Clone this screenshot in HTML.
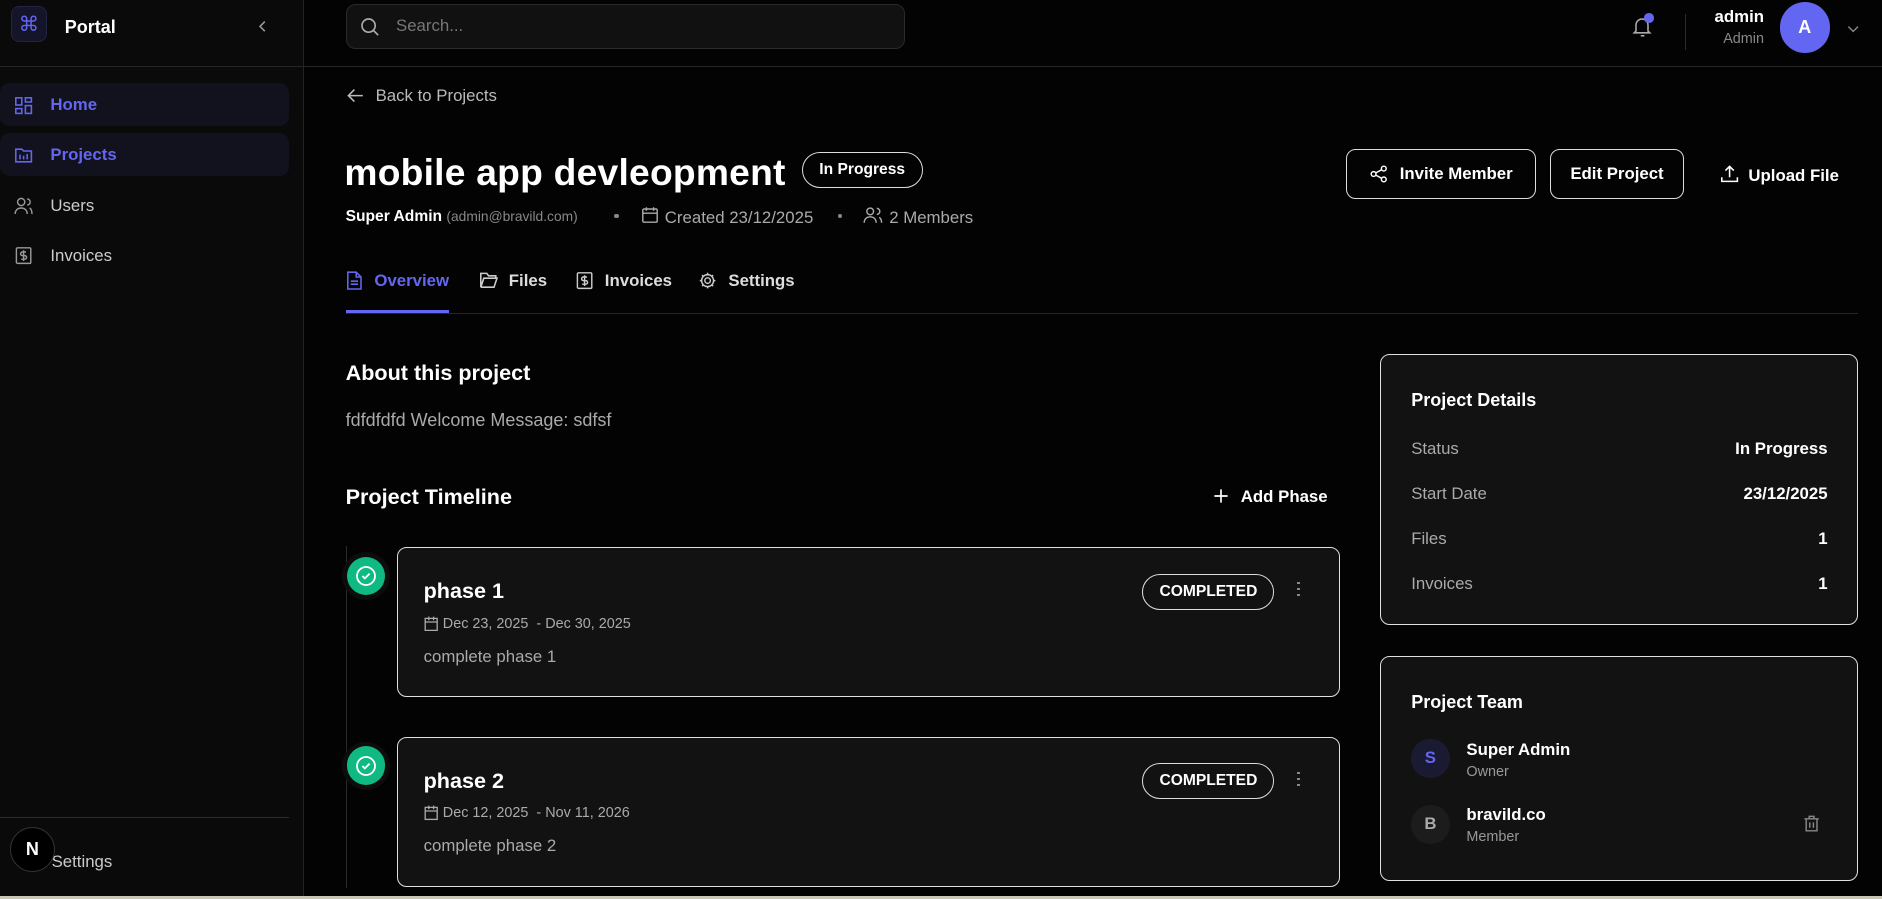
<!DOCTYPE html>
<html><head><meta charset="utf-8">
<style>
*{box-sizing:border-box;margin:0;padding:0}
html,body{width:1882px;height:899px;overflow:hidden;background:#030303}
#w{zoom:1.2;width:1568px;height:749px;position:relative;font-family:"Liberation Sans",sans-serif;color:#fff;background:#030303}
.a{position:absolute;white-space:nowrap}
.side{left:0;top:0;width:253px;height:749px;background:#0a0a0a;border-right:1px solid #222}
.nav{left:0;width:241px;height:36px;border-radius:8px;background:#12121f}
.card{background:#121212;border:1px solid #e0e0e0;border-radius:8px}
.g{color:#a8a8a8}
svg{position:absolute}
.btn{border:1px solid #ddd;border-radius:8px;height:42px;font-weight:bold;font-size:14px;display:flex;align-items:center;justify-content:center}
.pill{border:1px solid #ddd;border-radius:16px;font-weight:bold;font-size:13px;display:flex;align-items:center;justify-content:center}
</style></head><body><div id="w">
<div class="a side"></div>
<div class="a" style="left:0;top:55px;width:1568px;height:1px;background:#262626"></div>
<div class="a" style="left:9px;top:5px;width:30px;height:30px;border-radius:7px;background:#15152a;border:1px dotted #33335a;color:#6366f1;font-size:17px;text-align:center;line-height:30px">⌘</div>
<div class="a" style="left:54px;top:14px;font-size:15px;font-weight:bold">Portal</div>
<svg style="left:212px;top:15px" width="14" height="14" viewBox="0 0 14 14"><path d="M9 3L5 7l4 4" stroke="#999" fill="none" stroke-width="1.3"/></svg>
<div class="a nav" style="top:69px"></div>
<div class="a nav" style="top:111px"></div>
<svg style="left:12px;top:80px" width="16" height="16" viewBox="0 0 16 16" fill="none" stroke="#6366f1" stroke-width="1.3"><rect x="1.5" y="1.5" width="5" height="6"/><rect x="9.5" y="1.5" width="5" height="3.5"/><rect x="9.5" y="8" width="5" height="6.5"/><rect x="1.5" y="10.5" width="5" height="4"/></svg>
<div class="a" style="left:42px;top:79px;font-size:14px;font-weight:bold;color:#6366f1">Home</div>
<svg style="left:12px;top:121px" width="16" height="16" viewBox="0 0 16 16" fill="none" stroke="#6366f1" stroke-width="1.3"><path d="M1.5 3.5h5l1.5 1.5h6.5v9h-13z"/><path d="M5 8v4M8 9v3M11 7.5v4.5"/></svg>
<div class="a" style="left:42px;top:121px;font-size:14px;font-weight:bold;color:#6366f1">Projects</div>
<svg style="left:12px;top:163px" width="16" height="16" viewBox="0 0 16 16" fill="none" stroke="#999" stroke-width="1.2"><circle cx="6" cy="5" r="3"/><path d="M1 15c0-3 2-5 5-5s5 2 5 5M11 2.5a2.5 2.5 0 010 5M13 10c1.5.7 2 2.5 2 5"/></svg>
<div class="a" style="left:42px;top:163px;font-size:14px;color:#ccc">Users</div>
<svg style="left:12px;top:205px" width="16" height="16" viewBox="0 0 16 16" fill="none" stroke="#999" stroke-width="1.2"><rect x="2" y="1.5" width="12" height="13" rx="1"/><path d="M10 5H7a1.5 1.5 0 000 3h2a1.5 1.5 0 010 3H6M8 3.5v9"/></svg>
<div class="a" style="left:42px;top:205px;font-size:14px;color:#ccc">Invoices</div>
<div class="a" style="left:0;top:681px;width:241px;height:1px;background:#2a2a2a"></div>
<div class="a" style="left:43px;top:710px;font-size:14px;color:#ccc">Settings</div>
<div class="a" style="left:8px;top:689px;width:38px;height:38px;border-radius:50%;background:#000;border:1px solid #333;text-align:center;line-height:36px;font-size:15px;font-weight:bold">N</div>

<div class="a" style="left:288px;top:3px;width:466px;height:38px;background:#111;border:1px solid #2a2a2a;border-radius:8px"></div>
<svg style="left:299px;top:13px" width="18" height="18" viewBox="0 0 18 18" fill="none" stroke="#aaa" stroke-width="1.4"><circle cx="8" cy="8" r="5.5"/><path d="M12 12l4 4"/></svg>
<div class="a" style="left:330px;top:13px;font-size:14px;color:#777">Search...</div>
<svg style="left:1358px;top:11px" width="22" height="22" viewBox="0 0 22 22" fill="none" stroke="#aaa" stroke-width="1.3"><path d="M5 15V10a5 5 0 0110 0v5l1.5 1.5h-13z"/><path d="M9 19h3"/></svg>
<div class="a" style="left:1370px;top:11px;width:8px;height:8px;border-radius:50%;background:#6366f1"></div>
<div class="a" style="left:1404px;top:12px;width:1px;height:30px;background:#2a2a2a"></div>
<div class="a" style="left:1400px;width:70px;top:6px;text-align:right;font-size:14px;font-weight:bold">admin</div>
<div class="a" style="left:1400px;width:70px;top:26px;text-align:right;font-size:12px;color:#888">Admin</div>
<div class="a" style="left:1483px;top:2px;width:42px;height:42px;border-radius:50%;background:#6366f1;text-align:center;line-height:42px;font-weight:bold;font-size:15px">A</div>
<svg style="left:1538px;top:19px" width="12" height="10" viewBox="0 0 12 10"><path d="M2 3l4 4 4-4" stroke="#888" fill="none" stroke-width="1.2"/></svg>

<svg style="left:288px;top:72px" width="16" height="16" viewBox="0 0 16 16" fill="none" stroke="#bbb" stroke-width="1.3"><path d="M14 8H2M7 3L2 8l5 5"/></svg>
<div class="a g" style="left:313px;top:72px;font-size:14px;color:#bbb">Back to Projects</div>
<div class="a" style="left:287px;top:126px;font-size:31px;font-weight:bold;letter-spacing:0.2px">mobile app devleopment</div>
<div class="a pill" style="left:668px;top:127px;width:101px;height:30px">In Progress</div>
<div class="a" style="left:288px;top:173px;font-size:13px"><b>Super Admin</b> <span style="color:#888;font-size:11.5px">(admin@bravild.com)</span></div>
<div class="a" style="left:512px;top:178px;width:4px;height:4px;border-radius:50%;background:#888"></div>
<svg style="left:534px;top:172px" width="15" height="15" viewBox="0 0 15 15" fill="none" stroke="#aaa" stroke-width="1.2"><rect x="1.5" y="2.5" width="12" height="11" rx="1"/><path d="M1.5 6h12M4.5 1v3M10.5 1v3"/></svg>
<div class="a" style="left:554px;top:173px;font-size:14px;color:#aaa">Created 23/12/2025</div>
<div class="a" style="left:698px;top:178px;width:4px;height:4px;border-radius:50%;background:#888"></div>
<svg style="left:719px;top:172px" width="17" height="15" viewBox="0 0 17 15" fill="none" stroke="#aaa" stroke-width="1.2"><circle cx="6" cy="4.5" r="2.8"/><path d="M1 14c0-3 2-5 5-5s5 2 5 5M11.5 2a2.5 2.5 0 010 5M13.5 9.5c1.3.7 2 2.3 2 4.5"/></svg>
<div class="a" style="left:741px;top:173px;font-size:14px;color:#aaa">2 Members</div>

<div class="a btn" style="left:1122px;top:124px;width:158px"><svg style="position:static;margin-right:10px" width="15" height="15" viewBox="0 0 15 15" fill="none" stroke="#fff" stroke-width="1.2"><circle cx="11.5" cy="3" r="2"/><circle cx="3" cy="7.5" r="2"/><circle cx="11.5" cy="12" r="2"/><path d="M5 6.5l4.8-2.6M5 8.5l4.8 2.6"/></svg>Invite Member</div>
<div class="a btn" style="left:1292px;top:124px;width:111px">Edit Project</div>
<svg style="left:1433px;top:137px" width="16" height="16" viewBox="0 0 16 16" fill="none" stroke="#fff" stroke-width="1.3"><path d="M8 11V2M4.5 5.5L8 2l3.5 3.5M1.5 11v3.5h13V11"/></svg>
<div class="a" style="left:1457px;top:138px;font-size:14px;font-weight:bold">Upload File</div>

<svg style="left:288px;top:226px" width="14" height="16" viewBox="0 0 14 16" fill="none" stroke="#6366f1" stroke-width="1.3"><path d="M1.5 1h7l4 4v10h-11z M8.5 1v4h4M4 8.5h6M4 11h6"/></svg>
<div class="a" style="left:312px;top:226px;font-size:14px;font-weight:bold;color:#6366f1">Overview</div>
<svg style="left:399px;top:226px" width="16" height="15" viewBox="0 0 16 15" fill="none" stroke="#ccc" stroke-width="1.3"><path d="M1.5 2h5l1.5 2h6v2H4l-2.5 7.5zM4 6h11l-2.5 7.5h-11"/></svg>
<div class="a" style="left:424px;top:226px;font-size:14px;font-weight:bold;color:#ddd">Files</div>
<svg style="left:479px;top:226px" width="16" height="16" viewBox="0 0 16 16" fill="none" stroke="#ccc" stroke-width="1.2"><rect x="2" y="1.5" width="12" height="13" rx="1"/><path d="M10 5H7a1.5 1.5 0 000 3h2a1.5 1.5 0 010 3H6M8 3.5v9"/></svg>
<div class="a" style="left:504px;top:226px;font-size:14px;font-weight:bold;color:#ddd">Invoices</div>
<svg style="left:582px;top:226px" width="16" height="16" viewBox="0 0 16 16" fill="none" stroke="#ccc" stroke-width="1.2"><circle cx="8" cy="8" r="2.3"/><path d="M8 1.5v2M8 12.5v2M1.5 8h2M12.5 8h2M3.4 3.4l1.4 1.4M11.2 11.2l1.4 1.4M3.4 12.6l1.4-1.4M11.2 4.8l1.4-1.4"/><circle cx="8" cy="8" r="5"/></svg>
<div class="a" style="left:607px;top:226px;font-size:14px;font-weight:bold;color:#ddd">Settings</div>
<div class="a" style="left:288px;top:261px;width:1260px;height:1px;background:#262626"></div>
<div class="a" style="left:288px;top:258px;width:86px;height:3px;background:#6366f1"></div>

<div class="a" style="left:288px;top:300px;font-size:18px;font-weight:bold">About this project</div>
<div class="a" style="left:288px;top:342px;font-size:15px;color:#aaa">fdfdfdfd Welcome Message: sdfsf</div>
<div class="a" style="left:288px;top:403px;font-size:18px;font-weight:bold">Project Timeline</div>
<svg style="left:1010px;top:406px" width="15" height="15" viewBox="0 0 15 15" stroke="#fff" stroke-width="1.4"><path d="M7.5 2v11M2 7.5h11"/></svg>
<div class="a" style="left:1034px;top:406px;font-size:14px;font-weight:bold">Add Phase</div>

<div class="a" style="left:288px;top:455px;width:1px;height:285px;background:#2a2a2a"></div>

<div class="a" style="left:285px;top:460px;width:40px;height:40px;border-radius:50%;background:#0d0d0d"></div>
<div class="a" style="left:289px;top:464px;width:32px;height:32px;border-radius:50%;background:#10b981"></div>
<svg style="left:295px;top:470px" width="20" height="20" viewBox="0 0 20 20" fill="none" stroke="#fff" stroke-width="1.5"><circle cx="10" cy="10" r="7.5"/><path d="M7 10l2 2 4-4"/></svg>
<div class="a card" style="left:331px;top:456px;width:786px;height:125px"></div>
<div class="a" style="left:353px;top:482px;font-size:18px;font-weight:bold">phase 1</div>
<svg style="left:353px;top:513px" width="12" height="13" viewBox="0 0 12 13" fill="none" stroke="#aaa" stroke-width="1.1"><rect x="1" y="2" width="10" height="10"/><path d="M1 5h10M4 .5v3M8 .5v3"/></svg>
<div class="a" style="left:369px;top:513px;font-size:12px;color:#aaa">Dec 23, 2025 &nbsp;- Dec 30, 2025</div>
<div class="a" style="left:353px;top:539px;font-size:14px;color:#aaa">complete phase 1</div>
<div class="a pill" style="left:952px;top:478px;width:110px;height:30px">COMPLETED</div>
<div class="a" style="left:1081px;top:485px;width:2px;height:2px;background:#888;box-shadow:0 5px #888,0 10px #888"></div>

<div class="a" style="left:285px;top:618px;width:40px;height:40px;border-radius:50%;background:#0d0d0d"></div>
<div class="a" style="left:289px;top:622px;width:32px;height:32px;border-radius:50%;background:#10b981"></div>
<svg style="left:295px;top:628px" width="20" height="20" viewBox="0 0 20 20" fill="none" stroke="#fff" stroke-width="1.5"><circle cx="10" cy="10" r="7.5"/><path d="M7 10l2 2 4-4"/></svg>
<div class="a card" style="left:331px;top:614px;width:786px;height:125px"></div>
<div class="a" style="left:353px;top:640px;font-size:18px;font-weight:bold">phase 2</div>
<svg style="left:353px;top:671px" width="12" height="13" viewBox="0 0 12 13" fill="none" stroke="#aaa" stroke-width="1.1"><rect x="1" y="2" width="10" height="10"/><path d="M1 5h10M4 .5v3M8 .5v3"/></svg>
<div class="a" style="left:369px;top:671px;font-size:12px;color:#aaa">Dec 12, 2025 &nbsp;- Nov 11, 2026</div>
<div class="a" style="left:353px;top:697px;font-size:14px;color:#aaa">complete phase 2</div>
<div class="a pill" style="left:952px;top:636px;width:110px;height:30px">COMPLETED</div>
<div class="a" style="left:1081px;top:643px;width:2px;height:2px;background:#888;box-shadow:0 5px #888,0 10px #888"></div>

<div class="a card" style="left:1150px;top:295px;width:398px;height:226px"></div>
<div class="a" style="left:1176px;top:325px;font-size:15px;font-weight:bold">Project Details</div>
<div class="a" style="left:1176px;top:366px;font-size:14px;color:#aaa">Status</div>
<div class="a" style="left:1376px;width:147px;text-align:right;top:366px;font-size:14px;font-weight:bold">In Progress</div>
<div class="a" style="left:1176px;top:403px;font-size:14px;color:#aaa">Start Date</div>
<div class="a" style="left:1376px;width:147px;text-align:right;top:403px;font-size:14px;font-weight:bold">23/12/2025</div>
<div class="a" style="left:1176px;top:441px;font-size:14px;color:#aaa">Files</div>
<div class="a" style="left:1376px;width:147px;text-align:right;top:441px;font-size:14px;font-weight:bold">1</div>
<div class="a" style="left:1176px;top:478px;font-size:14px;color:#aaa">Invoices</div>
<div class="a" style="left:1376px;width:147px;text-align:right;top:478px;font-size:14px;font-weight:bold">1</div>

<div class="a card" style="left:1150px;top:547px;width:398px;height:187px"></div>
<div class="a" style="left:1176px;top:577px;font-size:15px;font-weight:bold">Project Team</div>
<div class="a" style="left:1176px;top:616px;width:32px;height:32px;border-radius:50%;background:#1a1a33;color:#6366f1;text-align:center;line-height:32px;font-weight:bold;font-size:14px">S</div>
<div class="a" style="left:1222px;top:617px;font-size:14px;font-weight:bold">Super Admin</div>
<div class="a" style="left:1222px;top:637px;font-size:12px;color:#999">Owner</div>
<div class="a" style="left:1176px;top:671px;width:32px;height:32px;border-radius:50%;background:#1c1c1c;color:#aaa;text-align:center;line-height:32px;font-weight:bold;font-size:14px">B</div>
<div class="a" style="left:1222px;top:671px;font-size:14px;font-weight:bold">bravild.co</div>
<div class="a" style="left:1222px;top:691px;font-size:12px;color:#999">Member</div>
<svg style="left:1502px;top:678px" width="16" height="16" viewBox="0 0 16 16" fill="none" stroke="#888" stroke-width="1.2"><path d="M2 4h12M6 4V2h4v2M3.5 4v10h9V4M6.5 7v4.5M9.5 7v4.5"/></svg>

<div class="a" style="left:0;top:747px;width:1568px;height:2px;background:#c9c6b6"></div>
</div></body></html>
